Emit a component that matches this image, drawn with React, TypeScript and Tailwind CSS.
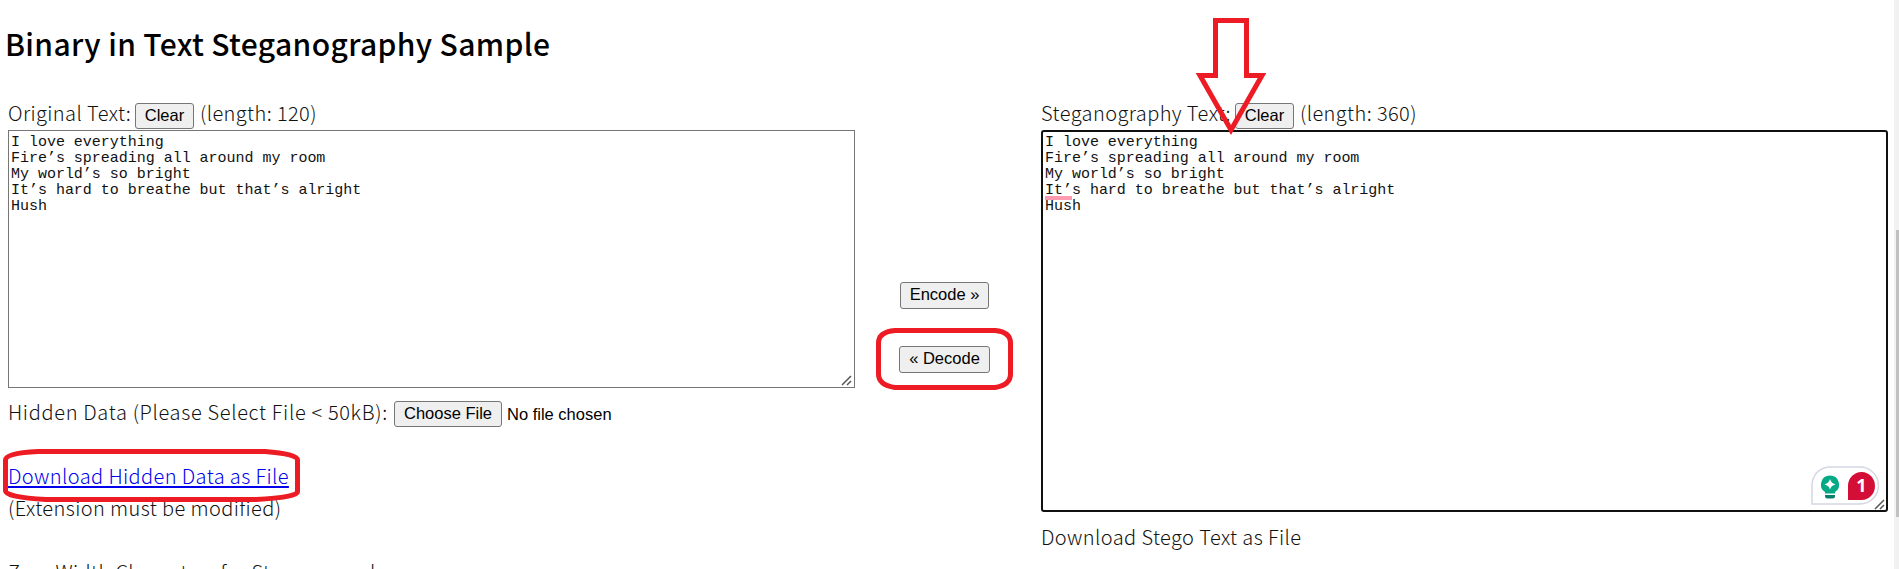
import React from "react";

const LYRICS = `I love everything
Fire’s spreading all around my room
My world’s so bright
It’s hard to breathe but that’s alright
Hush`;

function Button({ children, className }: { children: React.ReactNode; className: string }) {
  return (
    <button
      className={`shrink-0 whitespace-nowrap rounded-[3px] border border-[#767676] bg-[#efefef] pb-[2px] text-center font-['Liberation_Sans',sans-serif] text-[16.5px] leading-none tracking-normal text-black ${className}`}
    >
      {children}
    </button>
  );
}

function Grip({ className }: { className: string }) {
  return (
    <svg className={`absolute ${className}`} width="11" height="11" viewBox="0 0 11 11" fill="none" stroke="#555" strokeWidth="1.5">
      <path d="M1 10L10 1M6 10L10 6" />
    </svg>
  );
}

function TextBox({ className, children }: { className: string; children?: React.ReactNode }) {
  return (
    <div className={`relative bg-white ${className}`}>
      <pre className="font-['Liberation_Mono',monospace] text-[15px] leading-[16px] tracking-[-0.02px] text-[#111]">{LYRICS}</pre>
      {children}
    </div>
  );
}

export default function App() {
  return (
    <div className="relative flex h-[569px] w-[1899px] overflow-hidden bg-white font-['Noto_Sans_CJK_JP',sans-serif] text-[20px] font-light leading-[32px] tracking-[0.4px] text-[#111]">
      <main className="w-[1894px] shrink-0">
        <h1 className="flex h-[102px] items-start pl-[5px] pt-[21px] text-[30px] font-medium leading-[44px] tracking-[0.36px] text-black">
          <span className="whitespace-nowrap">Binary in Text Steganography Sample</span>
        </h1>
        <div className="flex">
          <section className="w-[847px] shrink-0 pl-[8px]">
            <div className="flex h-[28px] whitespace-nowrap">
              <span className="-mt-[5px] w-[127px] shrink-0">Original Text:</span>
              <Button className="mt-[1px] h-[26px] w-[59px]">Clear</Button>
              <span className="-mt-[5px] ml-[6px]">(length: 120)</span>
            </div>
            <TextBox className="h-[258px] w-[847px] border border-[#767676] px-[2px] pt-[4px]">
              <Grip className="bottom-[1px] right-[2px]" />
            </TextBox>
            <div className="flex h-[64px] whitespace-nowrap pt-[8px]">
              <span className="w-[386px] shrink-0 tracking-[0.67px]">Hidden Data (Please Select File &lt; 50kB):</span>
              <Button className="mt-[5px] h-[26px] w-[108px]">Choose File</Button>
              <span className="ml-[5px] mt-[2px] font-['Liberation_Sans',sans-serif] text-[16.5px] tracking-normal text-black">No file chosen</span>
            </div>
            <div className="mt-[8px] h-[32px] whitespace-nowrap">
              <a className="text-[#0000ee] underline decoration-2 underline-offset-[2px]">Download Hidden Data as File</a>
            </div>
            <p className="whitespace-nowrap">(Extension must be modified)</p>
            <p className="mt-[32px] whitespace-nowrap">Zero Width Characters for Steganography</p>
          </section>
          <section className="flex w-[194px] shrink-0 flex-col items-center pl-[1px] pt-[180px]">
            <Button className="h-[27px] w-[89px]">Encode »</Button>
            <Button className="mt-[37px] h-[27px] w-[91px]">« Decode</Button>
          </section>
          <section className="w-[847px] shrink-0">
            <div className="flex h-[28px] whitespace-nowrap">
              <span className="-mt-[5px] w-[194px] shrink-0">Steganography Text:</span>
              <Button className="mt-[1px] h-[26px] w-[59px]">Clear</Button>
              <span className="-mt-[5px] ml-[6px]">(length: 360)</span>
            </div>
            <TextBox className="h-[382px] w-[847px] rounded-[3px] border-2 border-[#101010] px-[2px] pt-[3px]">
              <i className="absolute left-[2px] top-[64px] h-[4px] w-[27px] bg-[#ff9bb0]" />
              <Grip className="bottom-0 right-px" />
              <svg className="absolute bottom-[5px] right-[6px]" width="69" height="39" viewBox="0 0 69 39">
                <path d="M1 38V20C1 8 9 1 20 1H49A18.500 18.500 0 0 1 49 38Z" fill="white" stroke="#d5d7e3" strokeWidth="1.5" />
                <path d="M19 9.500a9 9 0 0 0-5 16.500v1.500h10V26a9 9 0 0 0-5-16.500Z" fill="#05a986" />
                <path d="M14 29h10v1q0 2.500-2.500 2.500h-5Q14 32.500 14 30Z" fill="#087f6d" />
                <path d="M19 13q1 4 5.500 5.500-4.500 1-5.500 5-1-4-5.500-5Q18 17 19 13Z" fill="white" />
                <path d="M37 34V19.500A13.500 14 0 1 1 50.500 34Z" fill="#d40f37" />
                <text x="50.500" y="26" textAnchor="middle" fontFamily="Open Sans" fontSize="18" fontWeight="700" fill="white">1</text>
              </svg>
            </TextBox>
            <p className="mt-[9px] whitespace-nowrap">Download Stego Text as File</p>
          </section>
        </div>
      </main>
      <aside className="w-[5px] shrink-0 bg-[#f1f1f1] pl-[2px] pt-[230px]">
        <div className="h-[287px] bg-[#c1c1c1]" />
      </aside>
      <svg className="pointer-events-none absolute inset-0" width="1899" height="569" fill="none" stroke="#ed1c24" strokeWidth="5">
        <path d="M1215.500 20.500H1246.500V75.500H1262L1231 130L1200 75.500H1215.500Z" />
        <path d="M895 330.500H995Q1010.500 332 1010.500 343V374Q1010.500 385 995 387.500H895Q878.500 385 878.500 374V343Q878.500 332 895 330.500Z" />
        <path d="M38 451.500H265Q297.500 454 297.500 460V492Q297.500 497 256 499.500H46Q5.500 497 5.500 491V460Q5.500 453 38 451.500Z" />
      </svg>
    </div>
  );
}
